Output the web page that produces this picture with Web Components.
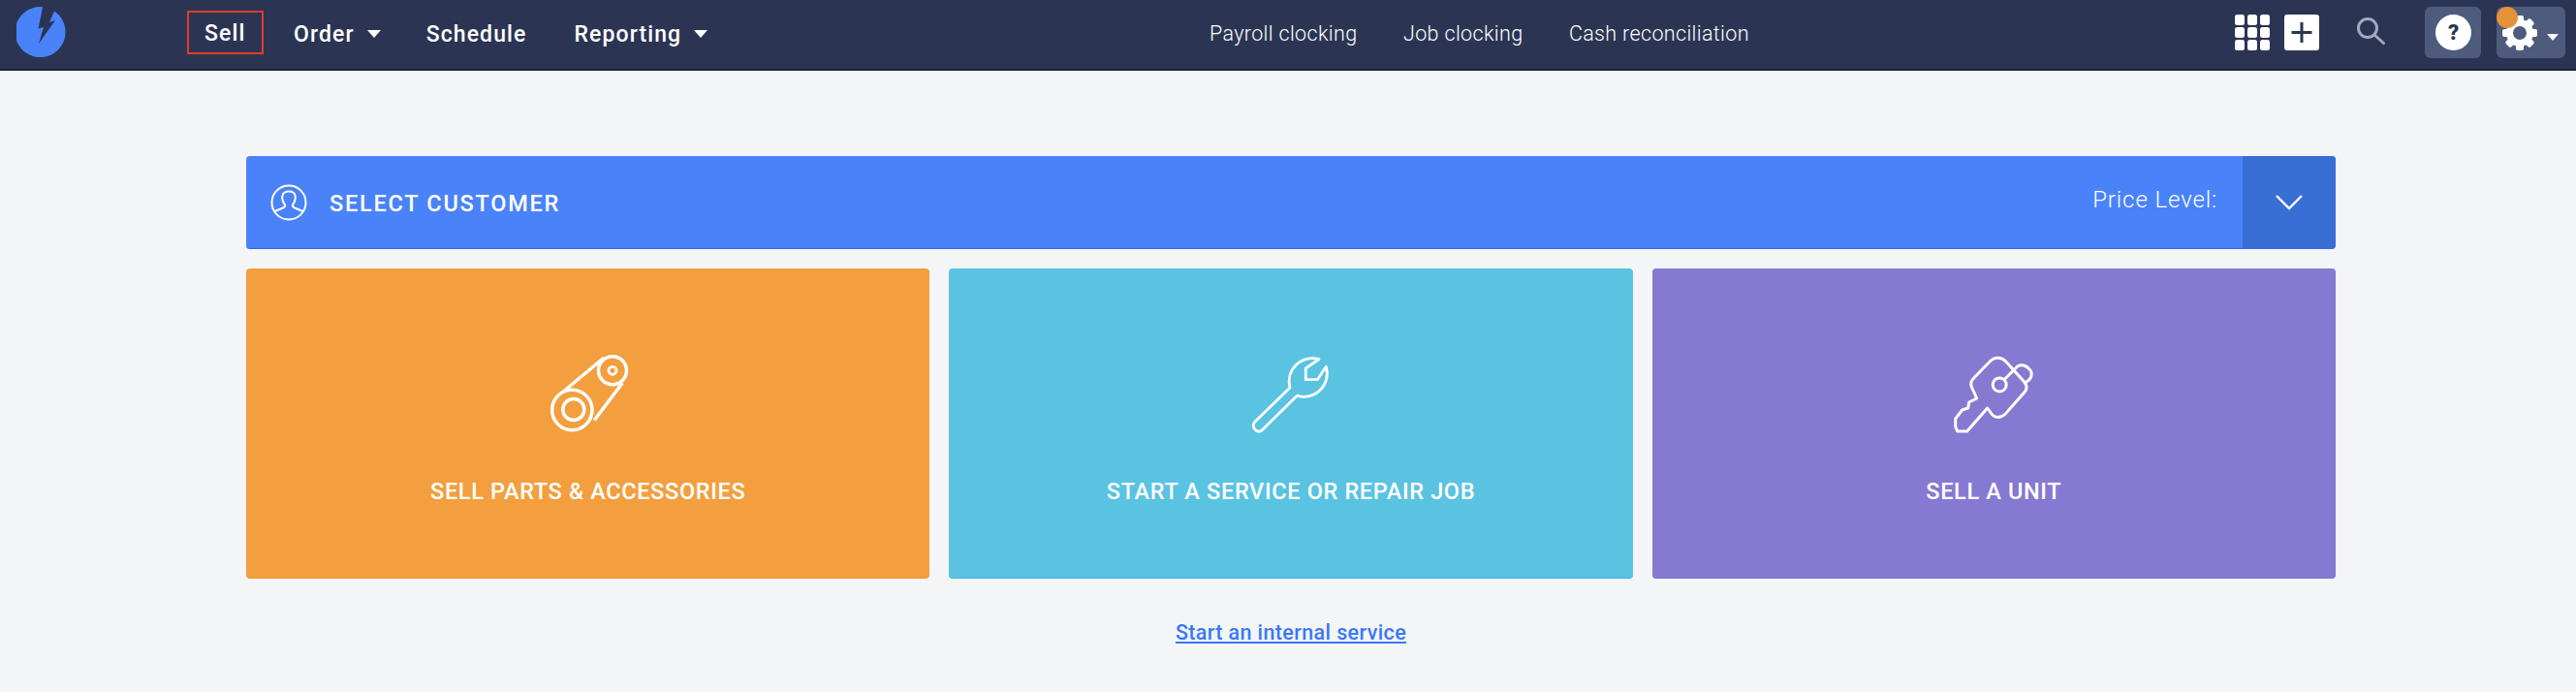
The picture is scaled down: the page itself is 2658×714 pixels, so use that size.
<!DOCTYPE html>
<html><head><meta charset="utf-8">
<style>
html,body{margin:0;padding:0;background:#f4f5f7;}
body{font-family:Roboto,"Liberation Sans",sans-serif;width:2658px;height:714px;overflow:hidden;}
app-page{display:block}
</style></head>
<body>
<template id="t-header">
<style>
:host{display:grid;grid-template-columns:1248px auto 1fr;align-items:center;padding-bottom:4px;background:#2b3553;border-bottom:2px solid #1b2340;box-sizing:border-box;height:73px;color:#fff;}
.left{display:flex;align-items:center}
.logo{margin-left:17px;width:53px;height:53px;flex:none;display:block}
.main{display:flex;align-items:center;margin-left:123px;}
.center{display:flex;align-items:center;gap:47.5px;padding-top:1px}
.right{display:flex;align-items:center;justify-content:flex-end;padding-right:11px}
.sq{display:block;flex:none}
.btn{background:#4e5b7c;border-radius:6px;height:53px;display:flex;align-items:center;box-sizing:border-box;position:relative;}
.dot{position:absolute;left:0;top:0;width:22px;height:22px;border-radius:50%;background:#e49339;}
</style>
<div class="left">
<svg class="logo" viewBox="0 0 53 53"><path fill="#4a83f9" d="M27 .2A26 26 0 1 0 39 4.500L34 16L40 14L23 38L28 21L22.500 22.500Z"/></svg>
<nav class="main"><slot name="main"></slot></nav>
</div>
<nav class="center"><slot name="center"></slot></nav>
<div class="right">
<svg class="sq" width="36" height="37" viewBox="0 0 36 37" fill="#fff" style="margin-right:15px"><rect x="0" y="0" width="10" height="11" rx="2.5"/><rect x="13" y="0" width="10" height="11" rx="2.5"/><rect x="26" y="0" width="10" height="11" rx="2.5"/><rect x="0" y="13" width="10" height="11" rx="2.5"/><rect x="13" y="13" width="10" height="11" rx="2.5"/><rect x="26" y="13" width="10" height="11" rx="2.5"/><rect x="0" y="26" width="10" height="11" rx="2.5"/><rect x="13" y="26" width="10" height="11" rx="2.5"/><rect x="26" y="26" width="10" height="11" rx="2.5"/></svg>
<svg class="sq" width="36" height="37" viewBox="0 0 36 37" style="margin-right:39px"><rect width="36" height="37" rx="3" fill="#fff"/><path d="M18 8v21M7.500 18.500h21" stroke="#2b3553" stroke-width="3" fill="none"/></svg>
<svg class="sq" width="29" height="28" viewBox="0 0 29 28" fill="none" stroke="#a4aabb" stroke-width="3" style="margin-right:41px;margin-top:-4px"><circle cx="11" cy="11" r="9.500"/><path d="M18 18L27.500 26.500" stroke-linecap="round"/></svg>
<div class="btn" style="width:58px;margin-right:16px;justify-content:center"><svg width="37" height="37" viewBox="0 0 37 37"><circle cx="18.500" cy="18.500" r="18.500" fill="#fff"/><text x="18.500" y="26" font-family="Roboto,sans-serif" font-weight="900" font-size="22" text-anchor="middle" fill="#2b3553">?</text></svg></div>
<div class="btn" style="width:71px;padding-left:5px">
<svg width="38" height="38" viewBox="0 0 38 38"><g transform="translate(19 19)"><circle r="10.500" fill="none" stroke="#fff" stroke-width="7"/><g fill="#fff"><rect x="-4" y="-18" width="8" height="8" rx="2"/><rect x="-4" y="-18" width="8" height="8" rx="2" transform="rotate(45)"/><rect x="-4" y="-18" width="8" height="8" rx="2" transform="rotate(90)"/><rect x="-4" y="-18" width="8" height="8" rx="2" transform="rotate(135)"/><rect x="-4" y="-18" width="8" height="8" rx="2" transform="rotate(180)"/><rect x="-4" y="-18" width="8" height="8" rx="2" transform="rotate(225)"/><rect x="-4" y="-18" width="8" height="8" rx="2" transform="rotate(270)"/><rect x="-4" y="-18" width="8" height="8" rx="2" transform="rotate(315)"/></g></g></svg>
<svg width="12" height="7" viewBox="0 0 12 7" style="margin-left:9px;margin-top:9px"><path d="M0 0h12L6 7z" fill="#fff"/></svg>
<span class="dot"></span></div>
</div>
</template>

<template id="t-nav">
<style>
:host{display:flex;align-items:center;font-size:23px;font-weight:500;color:#fff;height:45px;white-space:nowrap;letter-spacing:1.1px;box-sizing:border-box;padding-top:3px}
:host([boxed]){border:2px solid #e03c27;padding:1px 0 0 16px;width:79px;}
svg{margin-left:13px;margin-top:0;}
</style>
<slot></slot><svg width="14" height="8" viewBox="0 0 14 8" part="caret"><path d="M0 0h14L7 8z" fill="#fff"/></svg>
</template>

<template id="t-sub">
<style>:host{display:block;font-size:21.5px;font-weight:300;color:#fff;white-space:nowrap;letter-spacing:.35px;}</style><slot></slot>
</template>

<template id="t-bar">
<style>
:host{display:flex;align-items:center;height:96px;background:#4a83f9;border-radius:4px;border-bottom:1px solid #2a6cf0;box-sizing:border-box;color:#fff;overflow:hidden;}
svg.u{margin-left:25px;flex:none}
.t{margin-left:23px;font-size:23.5px;font-weight:500;letter-spacing:1.75px;margin-top:2px}
.p{margin-left:auto;font-size:24px;font-weight:300;letter-spacing:.9px;margin-top:-5px}
.d{margin-left:26px;width:96px;align-self:stretch;background:#396ed4;display:flex;align-items:center;justify-content:center}
</style>
<svg class="u" width="38" height="38" viewBox="0 0 38 38" fill="none" stroke="#fff" stroke-width="2"><circle cx="19" cy="19" r="17.500"/><path d="M4.500 28 L13 24.500 C15 23.500 15.500 22.500 15 21 C13 19 11.500 14.500 12.500 11.500 C13.500 8 16.500 7.500 19 7.500 C21.500 7.500 24.500 8 25.500 11.500 C26.500 14.500 25 19 23 21 C22.500 22.500 23 23.500 25 24.500 L33.500 28"/></svg>
<span class="t"><slot name="title"></slot></span>
<span class="p"><slot name="price"></slot></span>
<div class="d"><svg width="30" height="20" viewBox="0 0 30 20" fill="none" stroke="#fff" stroke-width="2.400"><path d="M2 3l13 13L28 3"/></svg></div>
</template>

<template id="t-card">
<style>
:host{display:flex;flex-direction:column;align-items:center;height:320px;border-radius:4px;box-sizing:border-box;color:#fff;background:var(--c);border-bottom:1px solid var(--b);}
.i{height:110px;margin-top:73px;display:flex;align-items:center;justify-content:center}
.l{margin-top:33px;font-size:23.5px;font-weight:500;letter-spacing:.65px;white-space:nowrap}
</style>
<div class="i"><slot name="icon"></slot></div>
<div class="l"><slot></slot></div>
</template>

<template id="t-page">
<style>
:host{display:block}
main{display:flex;flex-direction:column;width:2156px;margin:88px 0 0 254px;}
.cards{display:grid;grid-template-columns:1fr 1fr 1fr;gap:20px;margin-top:20px}
.link{align-self:center;margin-top:43px;font-size:21.5px;font-weight:500;color:#3a78f7;text-decoration:underline;letter-spacing:.38px;}
</style>
<slot name="header"></slot>
<main>
<slot name="bar"></slot>
<div class="cards"><slot name="cards"></slot></div>
<a class="link" href="#" onclick="return false">Start an internal service</a>
</main>
</template>

<app-page>
<app-header slot="header">
<nav-item slot="main" boxed>Sell</nav-item>
<nav-item slot="main" caret style="margin-left:31px">Order</nav-item>
<nav-item slot="main" style="margin-left:47px">Schedule</nav-item>
<nav-item slot="main" caret style="margin-left:49px">Reporting</nav-item>
<sub-item slot="center">Payroll clocking</sub-item>
<sub-item slot="center">Job clocking</sub-item>
<sub-item slot="center">Cash reconciliation</sub-item>
</app-header>
<customer-bar slot="bar"><span slot="title">SELECT CUSTOMER</span><span slot="price">Price Level:</span></customer-bar>
<action-card slot="cards" style="--c:#f39f3f;--b:#ee9530">
<svg slot="icon" width="140" height="110" viewBox="-3.300 0 140 110" fill="none" stroke="#fff" stroke-width="3.500"><circle cx="50" cy="73" r="20.700"/><circle cx="51.500" cy="72.500" r="11"/><circle cx="91.700" cy="32.300" r="14.500"/><circle cx="91.700" cy="32.300" r="4" stroke-width="2.800"/><path d="M41 54L83 19M73 83.500L102 45"/></svg>
SELL PARTS &amp; ACCESSORIES</action-card>
<action-card slot="cards" style="--c:#5ac3e2;--b:#35b5dc">
<svg slot="icon" width="140" height="110" viewBox="2 0 140 110" fill="none" stroke="#fff" stroke-width="2.800" stroke-linejoin="round"><path d="M101 20.700A24 24 0 0 0 71 50L35 85C32 88 33 92 36 94C38 96 41 95 42 94L78.300 58.300A24 24 0 0 0 108.300 28.300L99.300 41.700H87.300V30Z"/></svg>
START A SERVICE OR REPAIR JOB</action-card>
<action-card slot="cards" style="--c:#8679d2;--b:#7a6ccb">
<svg slot="icon" width="140" height="110" viewBox="-2.700 0 140 110" fill="none" stroke="#fff" stroke-width="3" stroke-linejoin="round"><path d="M45 50C43 46 44 43 47 40L63 23.500C68 18 75 18 80 23L99 44C102 48 102 52 99 55L83 73C78 80 71 83 66 78L61 71L40 95H30L28 90V82L35 73L41 71L42 65L50 61Z"/><circle cx="73.500" cy="47" r="7"/><path d="M78 42L92 28C97 25 103 28 106 33C108 38 105 42 100 45"/></svg>
SELL A UNIT</action-card>
</app-page>
<script>
function tpl(id){return document.getElementById(id).content.cloneNode(true)}
class Base extends HTMLElement{constructor(){super();this.attachShadow({mode:'open'}).appendChild(tpl(this.constructor.tid));}}
class AppPage extends Base{static tid='t-page'}
class AppHeader extends Base{static tid='t-header'}
class NavItem extends Base{static tid='t-nav';connectedCallback(){if(!this.hasAttribute('caret'))this.shadowRoot.querySelector('svg').style.display='none'}}
class SubItem extends Base{static tid='t-sub'}
class CustomerBar extends Base{static tid='t-bar'}
class ActionCard extends Base{static tid='t-card'}
customElements.define('app-page',AppPage);
customElements.define('app-header',AppHeader);
customElements.define('nav-item',NavItem);
customElements.define('sub-item',SubItem);
customElements.define('customer-bar',CustomerBar);
customElements.define('action-card',ActionCard);
</script>
</body></html>
